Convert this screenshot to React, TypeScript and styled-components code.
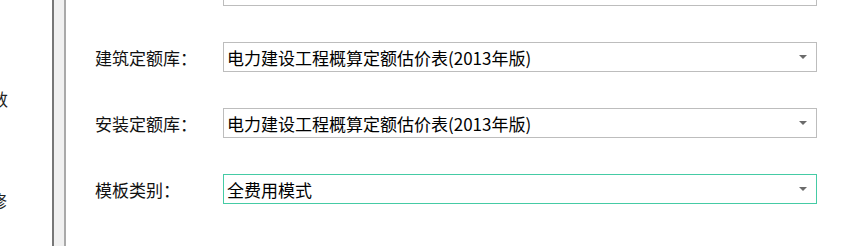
import React from "react";
import styled, { createGlobalStyle } from "styled-components";

const Global = createGlobalStyle`
  html, body { margin: 0; padding: 0; background: #ffffff; }
  body { font-family: "Noto Sans CJK SC", "Microsoft YaHei", sans-serif; }
  #root { height: 246px; overflow: hidden; }
`;

const Page = styled.div`
  display: flex;
  flex-direction: row;
  height: 246px;
  width: 853px;
  overflow: hidden;
  background: #ffffff;
`;

const Nav = styled.div`
  width: 52px;
  flex: none;
  overflow: hidden;
  display: flex;
  flex-direction: column;
  padding-top: 89px;
  gap: 83px;
  box-sizing: border-box;
`;

const NavItem = styled.div<{ $shift: number }>`
  margin-left: ${(p) => p.$shift}px;
  white-space: nowrap;
  font-size: 17px;
  line-height: 19px;
  color: #222;
`;

const Splitter = styled.div`
  width: 14px;
  flex: none;
  box-sizing: border-box;
  background: #f0f0f0;
  border-left: 2px solid #777777;
  border-right: 2px solid #a9a9a9;
`;

const Form = styled.div`
  flex: 1;
  display: flex;
  flex-direction: column;
  gap: 36px;
  margin-top: -54px;
  padding-left: 29px;
`;

const Row = styled.div<{ $h: number }>`
  display: flex;
  align-items: center;
  height: ${(p) => p.$h}px;
`;

const Label = styled.div`
  width: 128px;
  flex: none;
  font-size: 17px;
  color: #111;
  white-space: nowrap;
`;

const Box = styled.div<{ $focus?: boolean; $h: number }>`
  width: 594px;
  height: ${(p) => p.$h}px;
  box-sizing: border-box;
  border: 1px solid ${(p) => (p.$focus ? "#45cba5" : "#bdbdbd")};
  background: #ffffff;
  display: flex;
  align-items: center;
  padding: 0 9px 0 3px;
  font-size: 17px;
  color: #000;
`;

const Value = styled.div`
  flex: 1;
  white-space: nowrap;
  overflow: hidden;
`;

const Arrow = styled.div`
  width: 0;
  height: 0;
  border-left: 4px solid transparent;
  border-right: 4px solid transparent;
  border-top: 4px solid #6b6b6b;
`;

type Field = { label: string; value: string; select: boolean; focus?: boolean; h: number };

const fields: Field[] = [
  { label: "备注：", value: "", select: false, h: 60 },
  { label: "建筑定额库：", value: "电力建设工程概算定额估价表(2013年版)", select: true, h: 30 },
  { label: "安装定额库：", value: "电力建设工程概算定额估价表(2013年版)", select: true, h: 30 },
  { label: "模板类别：", value: "全费用模式", select: true, focus: true, h: 30 },
];

export default function App() {
  return (
    <Page>
      <Global />
      <Nav>
        <NavItem $shift={-26}>参数</NavItem>
        <NavItem $shift={-27}>检修</NavItem>
      </Nav>
      <Splitter />
      <Form>
        {fields.map((f) => (
          <Row key={f.label} $h={f.h}>
            <Label>{f.label}</Label>
            <Box $focus={f.focus} $h={f.h}>
              <Value>{f.value}</Value>
              {f.select && <Arrow />}
            </Box>
          </Row>
        ))}
      </Form>
    </Page>
  );
}
